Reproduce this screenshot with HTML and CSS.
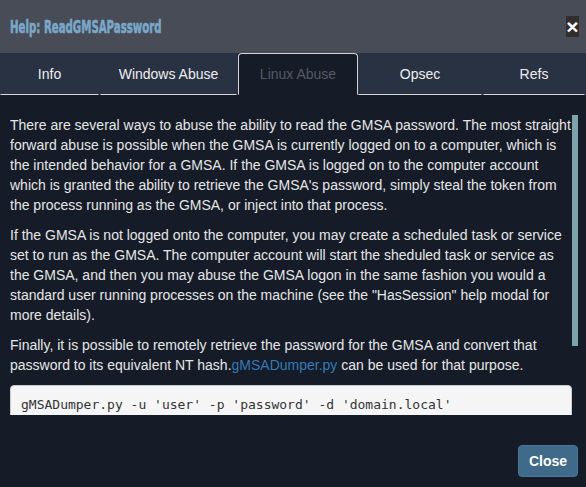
FILE: index.html
```html
<!DOCTYPE html>
<html>
<head>
<meta charset="utf-8">
<link rel="stylesheet" href="styles.css">
</head>
<body>
<div class="modal">
  <div class="modal-header">
    <h4 class="modal-title"><span class="title-text">Help: ReadGMSAPassword</span></h4>
    <button class="close" type="button">×</button>
  </div>
  <ul class="tabs">
    <li class="tab"><a>Info</a></li>
    <li class="tab"><a>Windows Abuse</a></li>
    <li class="tab active"><a>Linux Abuse</a></li>
    <li class="tab"><a>Opsec</a></li>
    <li class="tab"><a>Refs</a></li>
  </ul>
  <div class="modal-body">
    <div class="scroll-view">
      <p>There are several ways to abuse the ability to read the GMSA password. The most straight forward abuse is possible when the GMSA is currently logged on to a computer, which is the intended behavior for a GMSA. If the GMSA is logged on to the computer account which is granted the ability to retrieve the GMSA's password, simply steal the token from the process running as the GMSA, or inject into that process.</p>
      <p>If the GMSA is not logged onto the computer, you may create a scheduled task or service set to run as the GMSA. The computer account will start the sheduled task or service as the GMSA, and then you may abuse the GMSA logon in the same fashion you would a standard user running processes on the machine (see the "HasSession" help modal for more details).</p>
      <p>Finally, it is possible to remotely retrieve the password for the GMSA and convert that password to its equivalent NT hash.<a class="link">gMSADumper.py</a> can be used for that purpose.</p>
      <pre class="code">gMSADumper.py -u 'user' -p 'password' -d 'domain.local'</pre>
    </div>
    <div class="scroll-track"><div class="scroll-thumb"></div></div>
  </div>
  <div class="modal-footer">
    <button class="btn" type="button">Close</button>
  </div>
</div>
</body>
</html>
```

FILE: styles.css
```css
html, body {
  margin: 0;
  padding: 0;
  background: #151c28;
}
.modal {
  width: 586px;
  height: 487px;
  display: flex;
  flex-direction: column;
  background: #151c28;
  font-family: "Liberation Sans", Arial, sans-serif;
  font-size: 14px;
  line-height: 20px;
  color: #e6e6e6;
  overflow: hidden;
}
.modal-header {
  height: 53px;
  flex: none;
  background: #474c57;
  display: flex;
  align-items: center;
  justify-content: space-between;
  padding: 0 7px 0 10px;
  box-sizing: border-box;
}
.modal-title {
  margin: 0;
  font-family: "DejaVu Sans Condensed", "DejaVu Sans", sans-serif;
  font-weight: bold;
  font-size: 18px;
  line-height: 20px;
  color: #7aa8c8;
  white-space: nowrap;
}
.title-text {
  display: inline-block;
  transform: scaleX(0.63);
  transform-origin: left center;
  -webkit-text-stroke: 0.6px #7aa8c8;
}
.close {
  width: 13px;
  height: 21px;
  padding: 0;
  border: 0;
  background: #322e2f;
  color: #ffffff;
  font-family: "Liberation Sans", Arial, sans-serif;
  font-weight: bold;
  font-size: 21px;
  line-height: 21px;
  display: flex;
  align-items: center;
  justify-content: center;
  margin-top: -1px;
}
.tabs {
  list-style: none;
  margin: 0;
  padding: 0;
  flex: none;
  background: #283243;
  display: grid;
  grid-template-columns: 100px 138px 120px 125px 1fr;
}
.tab a {
  display: block;
  margin-right: 1px;
  padding: 10px 0;
  text-align: center;
  color: #eeeeee;
  border: 1px solid transparent;
  border-bottom-color: #d8d8d8;
  border-radius: 4px 4px 0 0;
}
.tab.active a {
  margin-right: 0;
  background: #151c28;
  color: #555a62;
  border-color: #d4d4d4;
  border-bottom-color: transparent;
}
.modal-body {
  flex: none;
  display: flex;
  padding: 20px 8px 0 10px;
}
.scroll-view {
  width: 562px;
  height: 300px;
  overflow: hidden;
}
.scroll-track {
  width: 6px;
  height: 300px;
  background: #151c28;
}
.scroll-thumb {
  height: 231px;
  background: #7ba5aa;
}
.scroll-view p {
  margin: 0 0 10px;
}
.link {
  color: #337ab7;
  text-decoration: none;
}
.code {
  margin: 0 0 10px;
  padding: 9px 10px;
  background: #f5f5f5;
  border: 1px solid #cccccc;
  border-radius: 4px;
  color: #333333;
  font-family: "DejaVu Sans Mono", "Liberation Mono", monospace;
  font-size: 13px;
  line-height: 19px;
  white-space: pre;
}
.modal-footer {
  flex: 1;
  display: flex;
  justify-content: flex-end;
  align-items: flex-start;
  padding: 30px 8px 0 0;
}
.btn {
  width: 60px;
  height: 32px;
  padding: 0;
  background: #3f6a8a;
  border: 1px solid #4a7797;
  border-radius: 4px;
  color: #ffffff;
  font-family: "Liberation Sans", Arial, sans-serif;
  font-weight: bold;
  font-size: 14px;
}
```
